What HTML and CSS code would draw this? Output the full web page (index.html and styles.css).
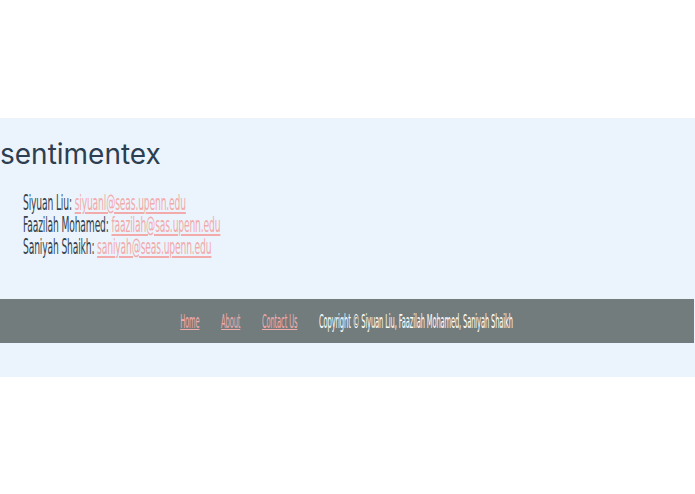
FILE: index.html
```html
<!DOCTYPE html>
<html>
<head>
<meta charset="utf-8">
<link rel="stylesheet" href="styles.css">
</head>
<body>
<div class="page">
  <h1 class="title">sentimentex</h1>
  <div class="contacts">
    <p class="line"><span class="cond">Siyuan Liu: <a href="#">siyuanl@seas.upenn.edu</a></span></p>
    <p class="line"><span class="cond">Faazilah Mohamed: <a href="#">faazilah@sas.upenn.edu</a></span></p>
    <p class="line"><span class="cond">Saniyah Shaikh: <a href="#">saniyah@seas.upenn.edu</a></span></p>
  </div>
  <footer class="footer">
    <span class="fcond">
      <a href="#" class="flink">Home</a>
      <a href="#" class="flink">About</a>
      <a href="#" class="flink">Contact Us</a>
      <span class="copy">Copyright © Siyuan Liu, Faazilah Mohamed, Saniyah Shaikh</span>
    </span>
  </footer>
</div>
</body>
</html>
```
FILE: styles.css
```css
html, body {
  margin: 0;
  padding: 0;
  background: #ffffff;
}
.page {
  margin-top: 118px;
  background: #ebf4fc;
  height: 259px;
  overflow: hidden;
  display: flex;
  flex-direction: column;
}
.title {
  margin: 18px 0 0 0;
  font-family: "Inter", "Lato", sans-serif;
  font-weight: 400;
  font-size: 28px;
  line-height: 36px;
  color: #2c3e50;
}
.contacts {
  margin: 20px 0 0 23px;
}
.line {
  margin: 0;
  height: 22px;
  line-height: 22px;
  white-space: nowrap;
}
.cond {
  display: inline-block;
  font-family: "DejaVu Sans Condensed", "Liberation Sans Narrow", sans-serif;
  font-stretch: condensed;
  font-size: 21px;
  color: #34424f;
  transform: scaleX(0.485);
  transform-origin: left center;
  letter-spacing: -0.3px;
}
.cond a {
  color: #f2aaaa;
  text-decoration: underline;
}
.footer {
  margin-top: 41px;
  height: 44px;
  background: #727c7c;
  margin-right: 1px;
  display: flex;
  align-items: center;
  justify-content: center;
  white-space: nowrap;
}
.fcond {
  display: inline-block;
  font-family: "DejaVu Sans Condensed", "Liberation Sans Narrow", sans-serif;
  font-stretch: condensed;
  font-size: 19px;
  transform: scaleX(0.392);
  transform-origin: center center;
  letter-spacing: -0.3px;
}
.flink {
  color: #f2aaaa;
  text-decoration: underline;
  margin-right: 50px;
}
.copy {
  color: #ffffff;
}
```
